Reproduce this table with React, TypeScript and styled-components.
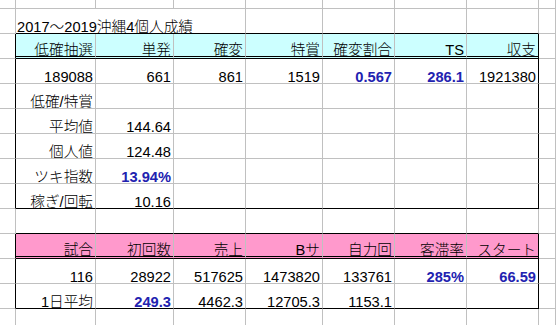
import React from "react";
import styled, { createGlobalStyle } from "styled-components";

const GRID = "#c0c0c0";

const GlobalStyle = createGlobalStyle`
  html, body {
    margin: 0;
    padding: 0;
    background: #ffffff;
    overflow: hidden;
  }
`;

const Sheet = styled.div`
  display: grid;
  grid-template-columns: 16px 80px 78px 72px 77px 72px 72px 72px 1fr;
  grid-template-rows: 9px repeat(13, 25px);
  width: 556px;
  height: 325px;
  overflow: hidden;
  font-family: "Liberation Sans", "Noto Sans CJK JP", sans-serif;
  font-size: 14.67px;
  font-weight: 300;
  color: #000000;
`;

type Edge = "grid" | "frame" | "double";

const Cell = styled.div<{
  $span: number;
  $align: "left" | "right";
  $fill?: string;
  $right: Edge;
  $bottom: Edge;
}>`
  box-sizing: border-box;
  grid-column: span ${(p) => p.$span};
  display: flex;
  align-items: flex-end;
  justify-content: ${(p) => (p.$align === "left" ? "flex-start" : "flex-end")};
  padding: 0 2px 0 1px;
  line-height: 12px;
  white-space: nowrap;
  overflow: hidden;
  background: ${(p) => p.$fill ?? "#ffffff"};
  border-right: 1px solid ${(p) => (p.$right === "frame" ? "#000000" : GRID)};
  border-bottom: ${(p) =>
    p.$bottom === "double"
      ? "3px double #000000"
      : `1px solid ${p.$bottom === "frame" ? "#000000" : GRID}`};
`;

const Emph = styled.span`
  color: #2222b0;
  font-weight: bold;
`;

type Entry = string | { t: string; em?: boolean; span?: number; align?: "left" };

const E = (t: string): Entry => ({ t, em: true });
const blank = (n: number): Entry[] => Array.from({ length: n }, () => "");

const rows: Entry[][] = [
  blank(9),
  ["", { t: "2017～2019沖縄4個人成績", span: 3, align: "left" }, "", "", "", "", ""],
  ["", "低確抽選", "単発", "確変", "特賞", "確変割合", "TS", "収支", ""],
  ["", "189088", "661", "861", "1519", E("0.567"), E("286.1"), "1921380", ""],
  ["", "低確/特賞", ...blank(7)],
  ["", "平均値", "144.64", ...blank(6)],
  ["", "個人値", "124.48", ...blank(6)],
  ["", "ツキ指数", E("13.94%"), ...blank(6)],
  ["", "稼ぎ/回転", "10.16", ...blank(6)],
  blank(9),
  ["", "試合", "初回数", "売上", "Bサ", "自力回", "客滞率", "スタート", ""],
  ["", "116", "28922", "517625", "1473820", "133761", E("285%"), E("66.59"), ""],
  ["", "1日平均", E("249.3"), "4462.3", "12705.3", "1153.1", "", "", ""],
  blank(9),
];

type Table = { top: number; bottom: number; header: number; fill: string };

const TABLES: Table[] = [
  { top: 3, bottom: 9, header: 3, fill: "#ccffff" },
  { top: 11, bottom: 13, header: 11, fill: "#ff99cc" },
];

function edges(r: number, c: number, span: number) {
  const last = c + span - 1;
  const t = TABLES.find((tb) => r >= tb.top && r <= tb.bottom);
  const inCols = c >= 2 && last <= 8;
  const right: Edge = t && (last === 1 || last === 8) ? "frame" : "grid";
  let bottom: Edge = "grid";
  if (inCols && TABLES.some((tb) => r === tb.top - 1 || r === tb.bottom)) bottom = "frame";
  if (inCols && t && r === t.header) bottom = "double";
  const fill = inCols && t && r === t.header ? t.fill : undefined;
  return { right, bottom, fill };
}

export default function App() {
  const cells: React.ReactNode[] = [];
  rows.forEach((row, ri) => {
    const r = ri + 1;
    let c = 1;
    row.forEach((entry) => {
      const obj = typeof entry === "string" ? { t: entry } : entry;
      const span = obj.span ?? 1;
      const { right, bottom, fill } = edges(r, c, span);
      cells.push(
        <Cell
          key={`${r}-${c}`}
          $span={span}
          $align={obj.align ?? "right"}
          $fill={fill}
          $right={right}
          $bottom={bottom}
        >
          {obj.em ? <Emph>{obj.t}</Emph> : obj.t}
        </Cell>
      );
      c += span;
    });
  });
  return (
    <>
      <GlobalStyle />
      <Sheet>{cells}</Sheet>
    </>
  );
}
